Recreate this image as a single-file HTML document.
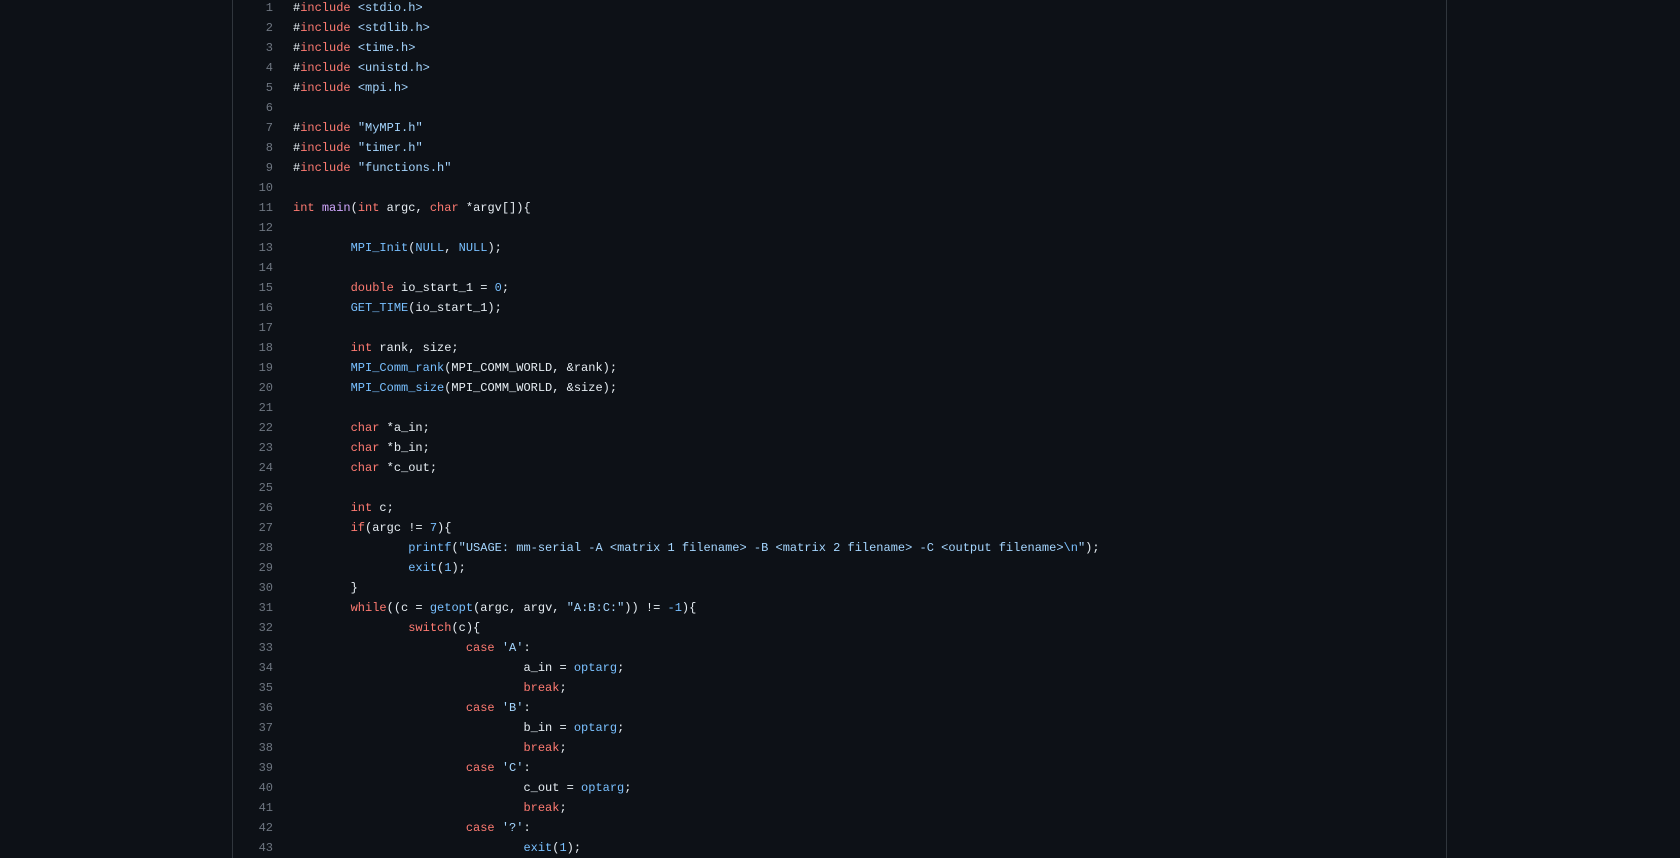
<!DOCTYPE html>
<html><head><style>
html,body{margin:0;padding:0;background:#0d1117;width:1680px;height:858px;overflow:hidden}
.wrap{position:absolute;left:232px;top:0;width:1215px;height:858px;border-left:1px solid #30363d;border-right:1px solid #30363d;box-sizing:border-box}
.ln{position:absolute;left:232px;top:-2px;width:41px;text-align:right;color:#6e7681}
.code{position:absolute;left:293px;top:-2px;color:#e6edf3}
pre{margin:0;font-family:"Liberation Mono",monospace;font-size:12px;line-height:20px;tab-size:8;-moz-tab-size:8}
.k{color:#ff7b72}.s{color:#a5d6ff}.f{color:#d2a8ff}.c{color:#79c0ff}
</style></head><body>
<div class="wrap"></div>
<pre class="ln">1
2
3
4
5
6
7
8
9
10
11
12
13
14
15
16
17
18
19
20
21
22
23
24
25
26
27
28
29
30
31
32
33
34
35
36
37
38
39
40
41
42
43</pre>
<pre class="code">#<span class="k">include</span> <span class="s">&lt;stdio.h&gt;</span>
#<span class="k">include</span> <span class="s">&lt;stdlib.h&gt;</span>
#<span class="k">include</span> <span class="s">&lt;time.h&gt;</span>
#<span class="k">include</span> <span class="s">&lt;unistd.h&gt;</span>
#<span class="k">include</span> <span class="s">&lt;mpi.h&gt;</span>

#<span class="k">include</span> <span class="s">"MyMPI.h"</span>
#<span class="k">include</span> <span class="s">"timer.h"</span>
#<span class="k">include</span> <span class="s">"functions.h"</span>

<span class="k">int</span> <span class="f">main</span>(<span class="k">int</span> argc, <span class="k">char</span> *argv[]){

	<span class="c">MPI_Init</span>(<span class="c">NULL</span>, <span class="c">NULL</span>);

	<span class="k">double</span> io_start_1 = <span class="c">0</span>;
	<span class="c">GET_TIME</span>(io_start_1);

	<span class="k">int</span> rank, size;
	<span class="c">MPI_Comm_rank</span>(MPI_COMM_WORLD, &amp;rank);
	<span class="c">MPI_Comm_size</span>(MPI_COMM_WORLD, &amp;size);

	<span class="k">char</span> *a_in;
	<span class="k">char</span> *b_in;
	<span class="k">char</span> *c_out;

	<span class="k">int</span> c;
	<span class="k">if</span>(argc != <span class="c">7</span>){
		<span class="c">printf</span>(<span class="s">"USAGE: mm-serial -A &lt;matrix 1 filename&gt; -B &lt;matrix 2 filename&gt; -C &lt;output filename&gt;</span><span class="c">\n</span><span class="s">"</span>);
		<span class="c">exit</span>(<span class="c">1</span>);
	}
	<span class="k">while</span>((c = <span class="c">getopt</span>(argc, argv, <span class="s">"A:B:C:"</span>)) != <span class="c">-1</span>){
		<span class="k">switch</span>(c){
			<span class="k">case</span> <span class="s">'A'</span>:
				a_in = <span class="c">optarg</span>;
				<span class="k">break</span>;
			<span class="k">case</span> <span class="s">'B'</span>:
				b_in = <span class="c">optarg</span>;
				<span class="k">break</span>;
			<span class="k">case</span> <span class="s">'C'</span>:
				c_out = <span class="c">optarg</span>;
				<span class="k">break</span>;
			<span class="k">case</span> <span class="s">'?'</span>:
				<span class="c">exit</span>(<span class="c">1</span>);</pre>
</body></html>
